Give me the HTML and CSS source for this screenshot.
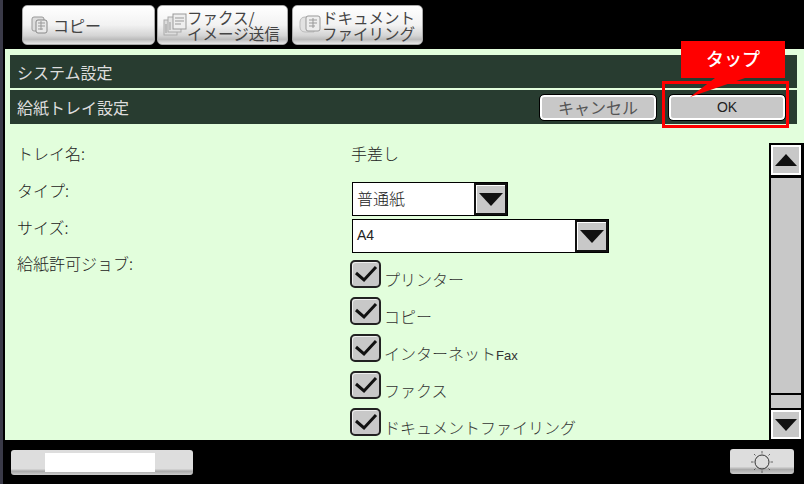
FILE: index.html
```html
<!DOCTYPE html>
<html lang="ja">
<head>
<meta charset="utf-8">
<title>給紙トレイ設定</title>
<link rel="stylesheet" href="styles.css">
</head>
<body>
<div class="screen">
  <nav class="tabs">
    <div class="tab tab-copy">
      <svg class="tab-icon-small" width="20" height="20" viewBox="0 0 20 20"><rect x="2" y="2" width="12" height="14" rx="2" fill="#ddd" stroke="#999"/><rect x="6" y="5" width="11" height="13" rx="2" fill="#e8e8e8" stroke="#888"/><path d="M8 8h7M8 11h7M8 14h5M11 6v9" stroke="#999" fill="none"/></svg>
      <span class="tab-single">コピー</span>
    </div>
    <div class="tab">
      <svg class="tab-icon" width="24" height="24" viewBox="0 0 24 24"><rect x="1" y="7" width="13" height="15" fill="#ddd" stroke="#aaa"/><rect x="5" y="4" width="13" height="15" fill="#e4e4e4" stroke="#aaa"/><rect x="10" y="1" width="13" height="15" fill="#eee" stroke="#999"/><path d="M12 5h9M12 8h9M12 11h6M3 11v9M7 9v8" stroke="#999" fill="none"/></svg>
      <span class="tab-double">ファクス/<br>イメージ送信</span>
    </div>
    <div class="tab tab-filing">
      <svg class="tab-icon" width="24" height="24" viewBox="0 0 24 24"><path d="M2 9c0-3 2-5 5-5h9v15H7c-3 0-5-2-5-5z" fill="#e2e2e2" stroke="#bbb"/><rect x="8" y="3" width="14" height="15" rx="2" fill="#eee" stroke="#999"/><path d="M11 7h8M11 10h8M11 13h6M15 5v10" stroke="#999" fill="none"/></svg>
      <span class="tab-double">ドキュメント<br>ファイリング</span>
    </div>
  </nav>

  <main class="panel">
    <header class="bar bar-title">システム設定</header>
    <header class="bar bar-sub">
      <span>給紙トレイ設定</span>
      <div class="bar-actions">
        <button class="btn btn-cancel">キャンセル</button>
        <button class="btn btn-ok">OK</button>
      </div>
    </header>

    <div class="content">
      <div class="form">
        <div class="label row-info">トレイ名:</div>
        <div class="value row-info">手差し</div>

        <div class="label label-select">タイプ:</div>
        <div class="select select-short">
          <span class="select-text">普通紙</span>
          <span class="select-arrow"><svg width="24" height="14" viewBox="0 0 24 14"><path d="M0 1h24L12 14z" fill="#111"/></svg></span>
        </div>

        <div class="label label-select">サイズ:</div>
        <div class="select select-long">
          <span class="select-text select-latin">A4</span>
          <span class="select-arrow"><svg width="24" height="14" viewBox="0 0 24 14"><path d="M0 1h24L12 14z" fill="#111"/></svg></span>
        </div>

        <div class="label label-jobs">給紙許可ジョブ:</div>
        <ul class="checks">
          <li class="check"><span class="box"><svg width="24" height="18" viewBox="0 0 24 18"><path d="M2 8l8 7L22 2" fill="none" stroke="#111" stroke-width="3"/></svg></span><span>プリンター</span></li>
          <li class="check"><span class="box"><svg width="24" height="18" viewBox="0 0 24 18"><path d="M2 8l8 7L22 2" fill="none" stroke="#111" stroke-width="3"/></svg></span><span>コピー</span></li>
          <li class="check"><span class="box"><svg width="24" height="18" viewBox="0 0 24 18"><path d="M2 8l8 7L22 2" fill="none" stroke="#111" stroke-width="3"/></svg></span><span>インターネット<span class="fax">Fax</span></span></li>
          <li class="check"><span class="box"><svg width="24" height="18" viewBox="0 0 24 18"><path d="M2 8l8 7L22 2" fill="none" stroke="#111" stroke-width="3"/></svg></span><span>ファクス</span></li>
          <li class="check"><span class="box"><svg width="24" height="18" viewBox="0 0 24 18"><path d="M2 8l8 7L22 2" fill="none" stroke="#111" stroke-width="3"/></svg></span><span>ドキュメントファイリング</span></li>
        </ul>
      </div>

      <div class="scrollbar">
        <div class="scroll-btn"><svg width="22" height="12" viewBox="0 0 22 12"><path d="M11 0l11 12H0z" fill="#111"/></svg></div>
        <div class="scroll-thumb"></div>
        <div class="scroll-rest"></div>
        <div class="scroll-btn scroll-btn-down"><svg width="22" height="12" viewBox="0 0 22 12"><path d="M0 0h22L11 12z" fill="#111"/></svg></div>
      </div>
    </div>
  </main>

  <footer class="footer">
    <div class="status"><div class="status-fill"></div></div>
    <div class="bright">
      <svg width="24" height="24" viewBox="0 0 24 24"><circle cx="12" cy="12" r="7" fill="none" stroke="#333"/><path d="M12 1v2.500M12 20.500v2.500M1 12h2.500M20.500 12h2.500M4 4l1.500 1.500M18.500 18.500l1.500 1.500M4 20l1.500-1.500M18.500 5.500l1.500-1.500" stroke="#444" stroke-width=".8" fill="none"/></svg>
    </div>
  </footer>

  <div class="callout">
    <div class="callout-label">タップ</div>
    <svg class="callout-tail" width="55" height="19" viewBox="0 0 55 19"><path d="M25 0h30L0 19z" fill="#f00"/></svg>
    <div class="callout-frame"></div>
  </div>
</div>
</body>
</html>
```
FILE: styles.css
```css
* { box-sizing: border-box; }
html, body { margin: 0; padding: 0; background: #000; }
body { font-family: "Noto Sans CJK JP", "Liberation Sans", sans-serif; color: #444; }
.screen {
  position: relative;
  width: 804px;
  height: 484px;
  overflow: hidden;
  background: #000;
  border-left: 3px solid #3a3a48;
  display: flex;
  flex-direction: column;
}
.tabs {
  height: 49px;
  flex: none;
  padding: 5px 0 0 19px;
  display: flex;
  gap: 2px;
}
.tab {
  width: 131px;
  height: 40px;
  border-radius: 5px;
  display: flex;
  align-items: center;
  padding-left: 5px;
  color: #444;
  background: linear-gradient(#fff 0, #f2f2f2 50%, #d4d4d4 78%, #bcbcbc 88%, #e8e8e8 100%);
  border: 1px solid #aaa;
}
.tab-copy { width: 133px; padding-left: 7px; }
.tab-filing { margin-left: 2px; }
.tab-icon, .tab-icon-small { flex: none; }
.tab-single { font-size: 16px; margin-left: 3px; line-height: 1; }
.tab-double { font-size: 15.5px; line-height: 16px; white-space: nowrap; }
.panel {
  margin-left: 2px;
  height: 391px;
  flex: none;
  background: #e2fedc;
  padding-top: 6px;
  overflow: hidden;
  display: flex;
  flex-direction: column;
}
.bar {
  margin: 0 7px 0 5px;
  background: #283c30;
  color: #ddd;
  font-size: 16px;
  display: flex;
  align-items: center;
  padding-left: 7px;
  flex: none;
}
.bar-title { height: 33px; }
.bar-sub {
  height: 34px;
  margin-top: 2px;
  justify-content: space-between;
}
.bar-actions { display: flex; gap: 13px; padding-right: 12px; }
.btn {
  width: 116px;
  height: 25px;
  padding: 0;
  font-family: inherit;
  background: #c8c8c8;
  color: #555;
  border: 2px solid #fff;
  outline: 1px solid #000;
  border-radius: 4px;
  font-size: 16px;
  line-height: 1;
}
.btn-ok { font-family: "Liberation Sans", sans-serif; font-size: 14px; color: #222; }
.content {
  flex: 1;
  display: flex;
  justify-content: space-between;
  min-height: 0;
}
.form {
  display: grid;
  grid-template-columns: 333px 1fr;
  grid-auto-rows: min-content;
  padding: 19px 0 0 12px;
  align-self: flex-start;
  font-size: 16px;
  font-weight: 300;
  color: #222;
}
.label { line-height: 20px; }
.row-info { height: 39px; }
.value { padding-left: 1px; line-height: 20px; }
.label-select { line-height: 16px; }
.select {
  height: 34px;
  margin: 0 0 3px 2px;
  background: #fff;
  border: 1px solid #000;
  display: flex;
  justify-content: space-between;
  align-items: stretch;
}
.select-short { width: 156px; }
.select-long { width: 257px; }
.select-text { padding-left: 4px; line-height: 30px; font-size: 16px; }
.select-latin { font-family: "Liberation Sans", sans-serif; font-size: 14px; font-weight: 400; }
.select-arrow {
  width: 33px;
  background: #c8c8c8;
  border: 2px solid #111;
  box-shadow: inset 1px 1px #fff;
  display: flex;
  align-items: center;
  justify-content: center;
}
.label-jobs { line-height: 14px; }
.checks {
  list-style: none;
  margin: 0;
  padding: 4px 0 0;
  display: flex;
  flex-direction: column;
  gap: 8px;
}
.check { height: 29px; display: flex; align-items: flex-end; line-height: 20px; color: #333; }
.box {
  width: 31px;
  height: 28px;
  align-self: flex-start;
  flex: none;
  background: #c8c8c8;
  border: 2px solid #222;
  border-radius: 5px;
  margin-right: 3px;
  display: flex;
  align-items: center;
  justify-content: center;
  box-shadow: inset 1px 1px #eee;
}
.fax { font-family: "Liberation Sans", sans-serif; font-size: 13px; font-weight: 400; line-height: 1; }
.scrollbar {
  width: 35px;
  margin: 19px 0 0;
  padding: 2px 3px 0 2px;
  background: #000;
  display: flex;
  flex-direction: column;
  flex: none;
}
.scroll-btn {
  width: 30px;
  height: 30px;
  flex: none;
  background: #c8c8c8;
  border: 2px solid #fff;
  display: flex;
  align-items: center;
  justify-content: center;
}
.scroll-thumb { height: 215px; margin-top: 3px; background: #c8c8c8; }
.scroll-rest { height: 13px; margin-top: 2px; background: #c8c8c8; }
.scroll-btn-down { margin-top: 2px; height: 29px; }
.footer {
  flex: 1;
  display: flex;
  justify-content: space-between;
  align-items: flex-start;
  padding: 10px 10px 0 8px;
}
.status {
  width: 182px;
  height: 25px;
  border-radius: 3px;
  background: linear-gradient(#ddd 0, #ddd 75%, #aaa 85%, #ccc 100%);
  display: flex;
}
.status-fill { width: 110px; height: 19px; background: #fff; margin: 3px 0 0 34px; }
.bright {
  width: 64px;
  height: 25px;
  margin-top: -1px;
  border-radius: 3px;
  background: linear-gradient(#ddd 0, #ddd 70%, #aaa 82%, #ccc 100%);
  display: flex;
  align-items: center;
  justify-content: center;
}
.callout { position: absolute; left: 659px; top: 41px; width: 130px; height: 88px; }
.callout-label {
  position: absolute;
  left: 19px;
  top: 0;
  width: 104px;
  height: 37px;
  background: #f00;
  color: #fff;
  font-size: 18px;
  font-weight: 500;
  line-height: 34px;
  text-align: center;
}
.callout-tail { position: absolute; left: 28px; top: 37px; }
.callout-frame {
  position: absolute;
  left: 0;
  top: 40px;
  width: 127px;
  height: 47px;
  border: 3px solid #f00;
}
```
